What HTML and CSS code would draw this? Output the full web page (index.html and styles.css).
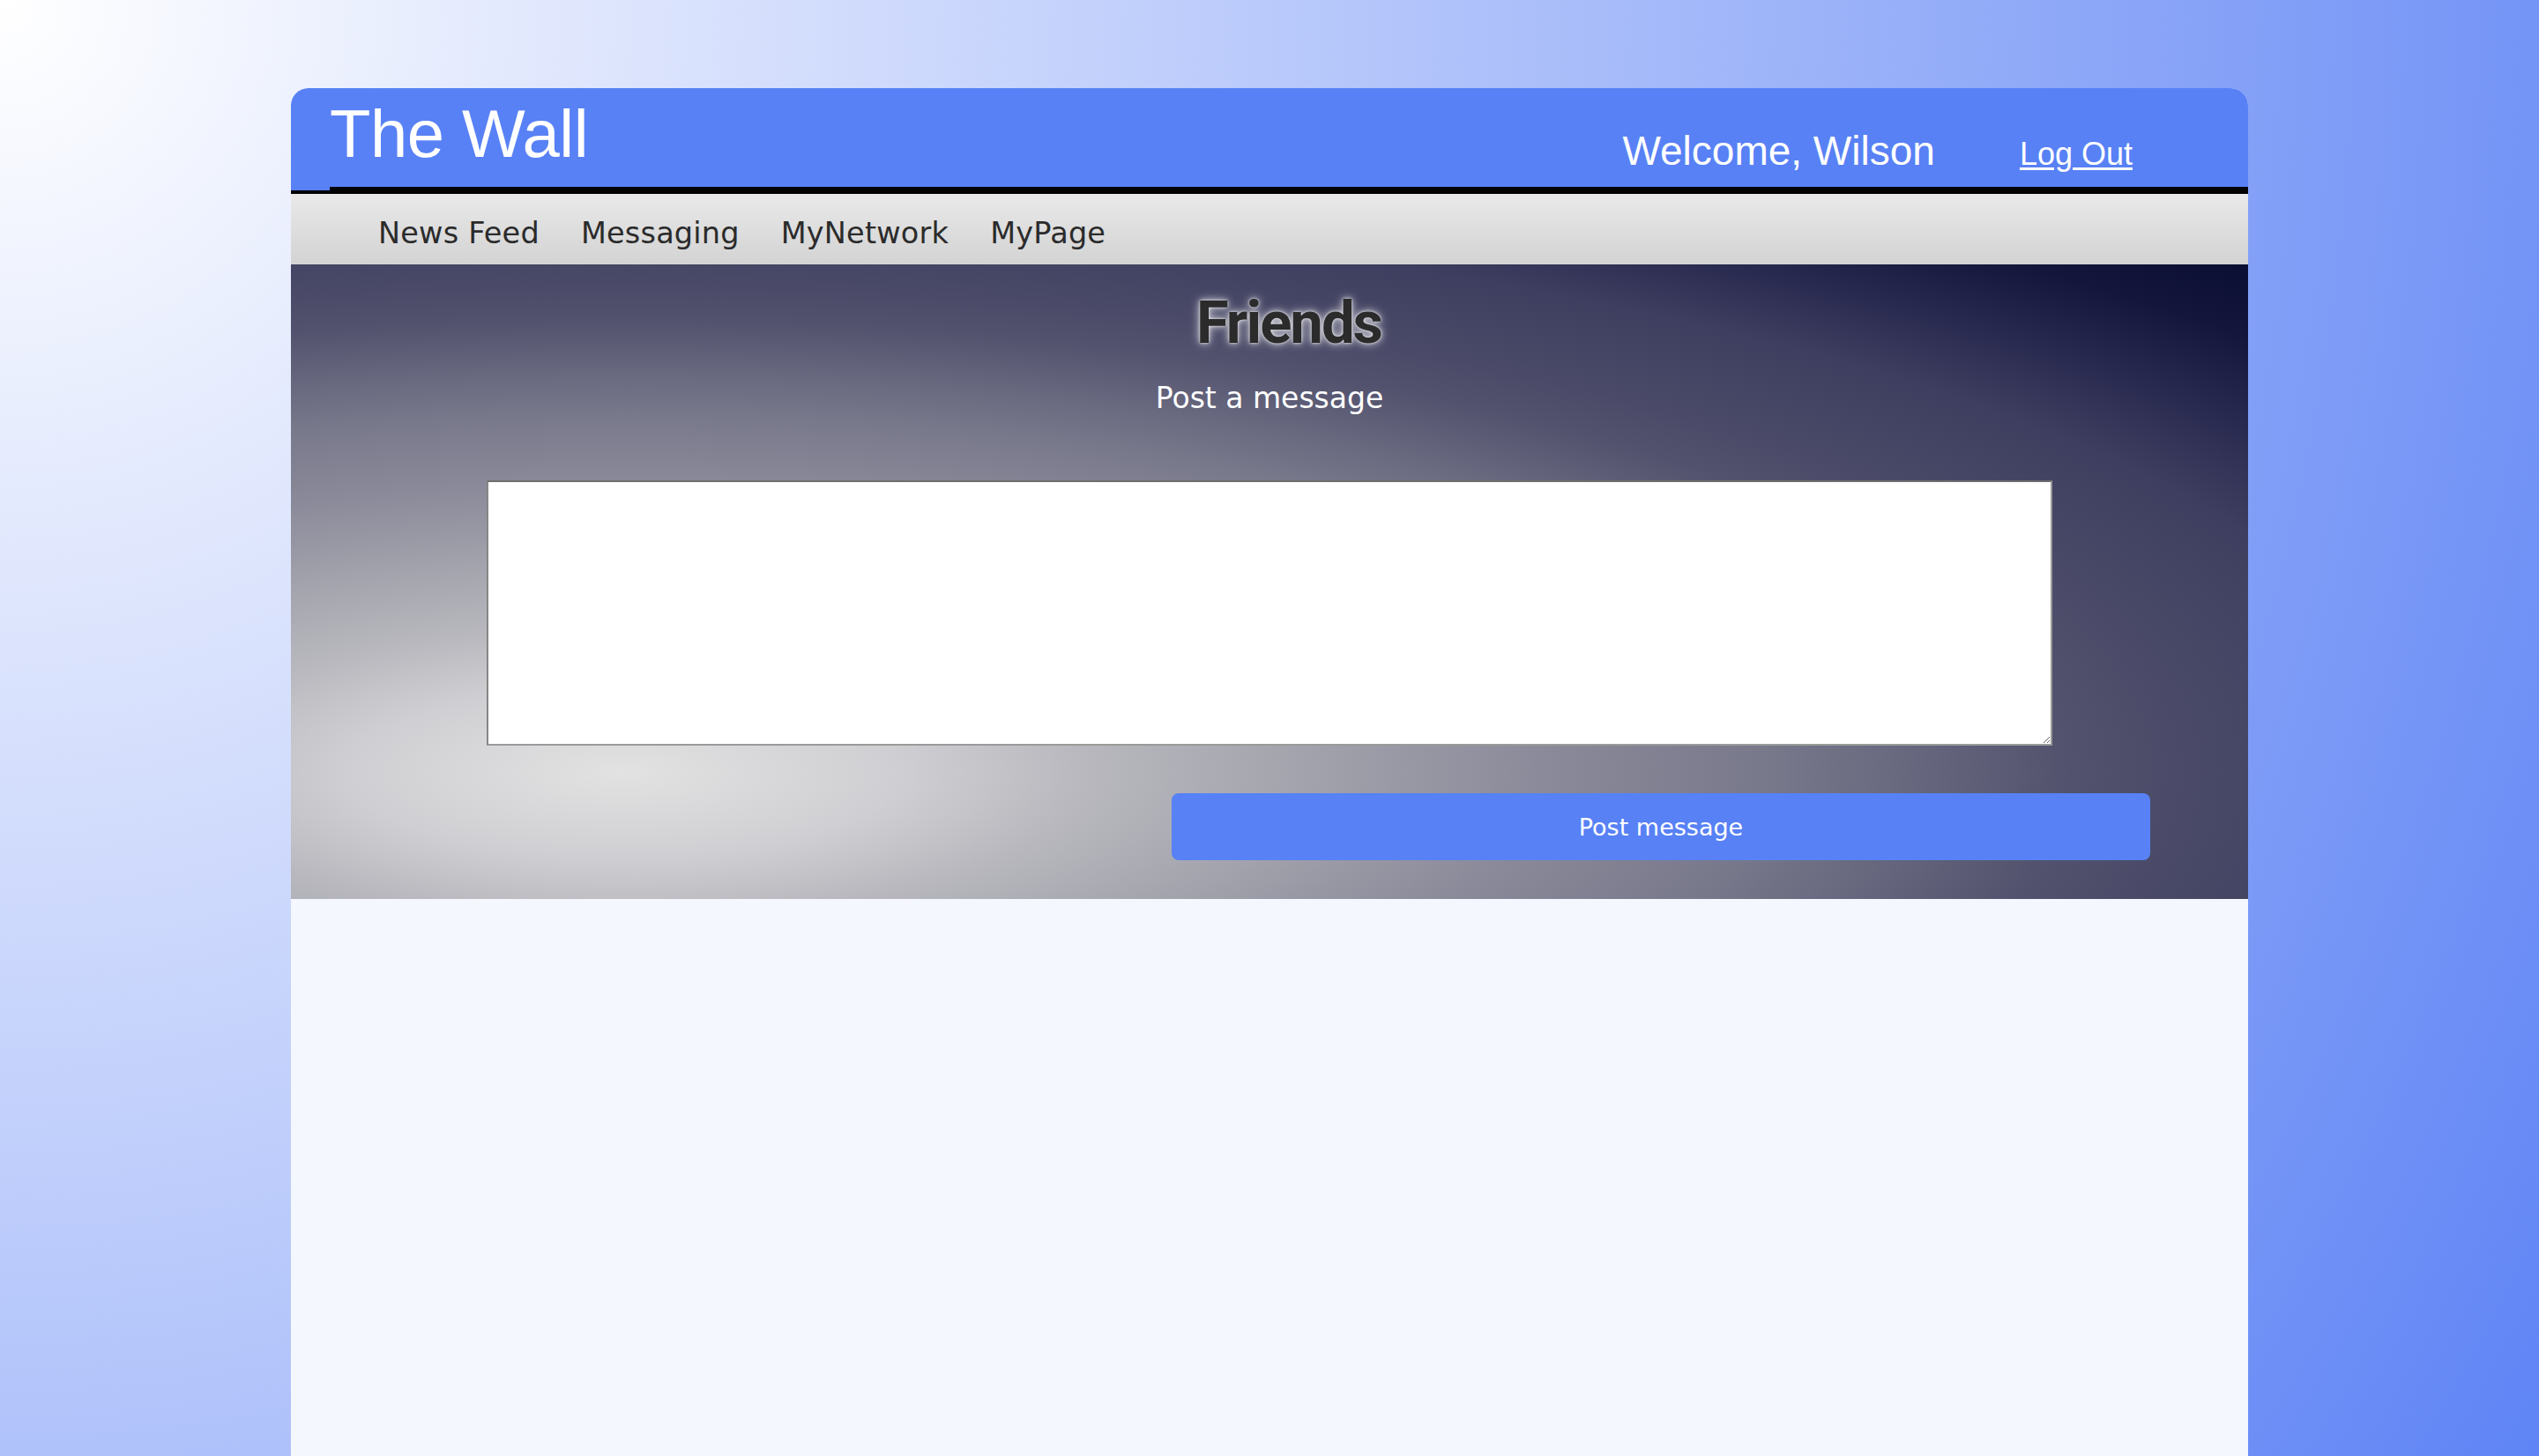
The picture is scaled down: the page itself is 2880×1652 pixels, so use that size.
FILE: index.html
```html
<!DOCTYPE html>
<html lang="en">
<head>
<meta charset="utf-8">
<title>The Wall</title>
<link rel="stylesheet" href="styles.css">
</head>
<body>
<div class="page">
  <header class="topbar">
    <div class="topbar-inner">
      <h1 class="brand">The Wall</h1>
      <div class="user">
        <span class="welcome">Welcome, Wilson</span>
        <a class="logout" href="#">Log Out</a>
      </div>
    </div>
  </header>
  <nav class="nav">
    <a class="nav-link" href="#">News Feed</a>
    <a class="nav-link" href="#">Messaging</a>
    <a class="nav-link" href="#">MyNetwork</a>
    <a class="nav-link" href="#">MyPage</a>
  </nav>
  <section class="composer">
    <h2 class="title">Friends</h2>
    <p class="subtitle">Post a message</p>
    <textarea class="message-box"></textarea>
    <button class="post-btn" type="button">Post message</button>
  </section>
  <main class="feed"></main>
</div>
</body>
</html>
```

FILE: styles.css
```css
html, body {
  margin: 0;
  padding: 0;
}

body {
  min-height: 100vh;
  background: radial-gradient(circle farthest-corner at 0 0, #ffffff 0%, #5f84f5 100%);
  font-family: "DejaVu Sans", sans-serif;
}

.page {
  width: 2220px;
  margin: 100px auto 0;
  min-height: calc(100vh - 100px);
  display: flex;
  flex-direction: column;
  background: #f4f7fe;
  border-radius: 20px 20px 0 0;
}

.topbar {
  background: #5881f5;
  border-bottom: 4px solid #000;
  border-radius: 20px 20px 0 0;
}

.topbar-inner {
  margin-left: 44px;
  height: 112px;
  border-bottom: 4px solid #000;
  display: flex;
  align-items: flex-start;
}

.brand {
  margin: 0;
  padding-top: 14px;
  font-family: "Liberation Sans", Arial, sans-serif;
  font-weight: normal;
  font-size: 76px;
  line-height: 76px;
  letter-spacing: -0.5px;
  color: #fff;
}

.user {
  margin-left: auto;
  padding-top: 48px;
  padding-right: 131px;
  display: flex;
  align-items: baseline;
  gap: 96px;
  font-family: "Liberation Sans", Arial, sans-serif;
  color: #fff;
}

.welcome {
  font-size: 46px;
  line-height: 46px;
}

.logout {
  font-size: 36px;
  line-height: 36px;
  color: #fff;
  text-decoration: underline;
  text-underline-offset: 3px;
}

.nav {
  height: 80px;
  box-sizing: border-box;
  padding: 28px 0 0 99px;
  display: flex;
  align-items: flex-start;
  gap: 47px;
  background: linear-gradient(to bottom, #e9e9e9, #d3d3d3);
}

.nav-link {
  font-family: "DejaVu Sans", sans-serif;
  font-size: 33.5px;
  line-height: 33px;
  letter-spacing: 0.2px;
  color: #2b2b2b;
  text-decoration: none;
}

.composer {
  height: 720px;
  box-sizing: border-box;
  padding-top: 33px;
  display: flex;
  flex-direction: column;
  align-items: center;
  background: radial-gradient(ellipse farthest-corner at 17% 80%,
    #e2e2e2 0%,
    #cfcfd3 12%,
    #b8b8be 20%,
    #a2a2ac 30%,
    #8a8a9a 40%,
    #78788b 50%,
    #64647c 57%,
    #52526e 63%,
    #474766 70%,
    #3e3e60 78%,
    #2a2b50 85%,
    #14163c 93%,
    #0b0e33 100%);
}

.title {
  margin: 0 0 0 44px;
  font-family: Roboto, "DejaVu Sans", sans-serif;
  font-weight: bold;
  font-size: 67px;
  line-height: 67px;
  letter-spacing: -2px;
  color: #2b2b2b;
  text-shadow: 0 0 3px rgba(255, 255, 255, 0.9), 0 0 8px rgba(255, 255, 255, 0.7), 0 0 14px rgba(255, 255, 255, 0.35);
}

.subtitle {
  margin: 36px 0 0;
  font-family: "DejaVu Sans", sans-serif;
  font-size: 33px;
  line-height: 32px;
  color: #fff;
}

.message-box {
  margin-top: 77px;
  width: 80%;
  height: 301px;
  box-sizing: border-box;
  border-style: solid;
  border-width: 2px;
  border-color: #6e6e6e #9a9a9a #9a9a9a #868686;
  background: #fff;
  padding: 4px;
  font-family: "DejaVu Sans", sans-serif;
  font-size: 24px;
}

.post-btn {
  margin-top: 54px;
  align-self: flex-end;
  margin-right: 5%;
  width: 50%;
  height: 76px;
  border: none;
  border-radius: 8px;
  background: #5881f5;
  color: #fff;
  font-family: "DejaVu Sans", sans-serif;
  font-size: 27px;
}

.feed {
  flex: 1;
  background: #f4f7fe;
}
```
